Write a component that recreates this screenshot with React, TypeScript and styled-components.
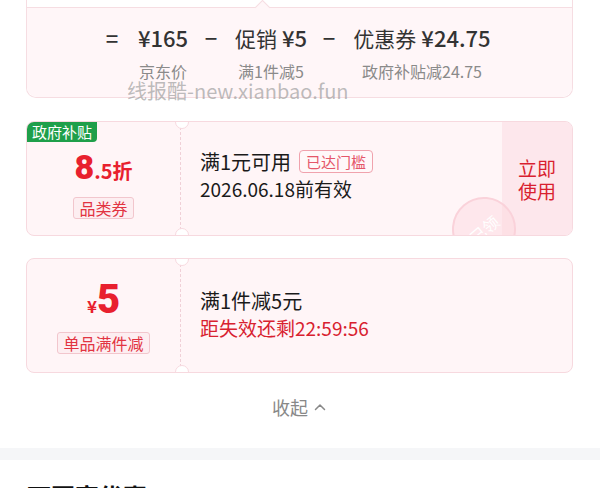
import React from 'react';
import styled, { createGlobalStyle } from 'styled-components';

//全体のスタイル
const GlobalStyle = createGlobalStyle`
  body {
    margin: 0;
    background: #ffffff;
    font-family: "Noto Sans CJK SC", "Noto Sans", sans-serif;
  }
`;

const Page = styled.div`
  position: relative;
  width: 600px;
  height: 488px;
  overflow: hidden;
  background: #ffffff;
`;

const Content = styled.div`
  padding: 0 27px 0 26px;
`;

//価格の計算カード
const SummaryCard = styled.div`
  border: 1px solid #f6dde2;
  border-top: none;
  border-radius: 0 0 10px 10px;
  background: #ffffff;
`;

const TopStrip = styled.div`
  height: 7px;
`;

const PricePanel = styled.div`
  position: relative;
  height: 90px;
  box-sizing: border-box;
  padding: 14px 0 0 73px;
  border-top: 1px solid #f6dde2;
  border-radius: 0 0 10px 10px;
  background: #fff6f8;

  &::before {
    content: "";
    position: absolute;
    top: -6px;
    left: 230px;
    width: 10px;
    height: 10px;
    background: #fff6f8;
    border-top: 1px solid #f6dde2;
    border-left: 1px solid #f6dde2;
    transform: rotate(45deg);
  }
`;

const PriceGrid = styled.div`
  display: grid;
  grid-template-columns: 24px 78px 18px 102px 14px 172px;
  grid-template-rows: 30px 22px;
  row-gap: 8px;
  align-items: center;
  justify-items: center;
`;

const Operator = styled.span`
  font-size: 22px;
  font-weight: 500;
  color: #333333;
  line-height: 30px;
`;

const PriceItem = styled.span`
  font-size: 21px;
  color: #333333;
  line-height: 30px;
  white-space: nowrap;
`;

const PriceValue = styled.b<{ $gap?: boolean }>`
  font-size: 22px;
  font-weight: 500;
  margin-left: ${({ $gap }) => ($gap ? '5px' : '0')};
`;

const PriceNote = styled.span`
  font-size: 16px;
  color: #8a8a8a;
  line-height: 22px;
  white-space: nowrap;
`;

//透かし
const Watermark = styled.div`
  position: absolute;
  left: 127px;
  top: 80px;
  font-size: 20px;
  line-height: 22px;
  color: rgba(160, 160, 160, 0.7);
  white-space: nowrap;
`;

//クーポン
const CouponList = styled.div`
  display: flex;
  flex-direction: column;
  gap: 22px;
  margin-top: 23px;
`;

const CouponCard = styled.div`
  position: relative;
  display: flex;
  height: 115px;
  box-sizing: border-box;
  border: 1px solid #f7d9df;
  border-radius: 8px;
  background: #fff5f7;
  overflow: hidden;
`;

const Notch = styled.span<{ $side: 'top' | 'bottom' }>`
  position: absolute;
  left: 148px;
  ${({ $side }) => ($side === 'top' ? 'top: -7px;' : 'bottom: -7px;')}
  width: 12px;
  height: 12px;
  border-radius: 50%;
  background: #ffffff;
  border: 1px solid #f7d9df;
`;

const LeftPart = styled.div<{ $padTop: number }>`
  width: 154px;
  flex-shrink: 0;
  box-sizing: border-box;
  padding-top: ${({ $padTop }) => $padTop}px;
  border-right: 1px dashed #f0d0d7;
  display: flex;
  flex-direction: column;
  align-items: center;
  justify-content: center;
  gap: 7px;
`;

const GreenTag = styled.span`
  position: absolute;
  left: 0;
  top: 0;
  width: 70px;
  height: 20px;
  background: #1f9f4a;
  color: #ffffff;
  font-size: 15px;
  line-height: 20px;
  text-align: center;
  border-radius: 0 0 4px 0;
`;

const Amount = styled.div`
  display: flex;
  align-items: baseline;
  color: #e8202e;
  font-weight: 700;
  line-height: 38px;
`;

const AmountPart = styled.span<{ $size: number }>`
  font-size: ${({ $size }) => $size}px;
  font-family: ${({ $size }) => ($size < 24 ? '"Noto Sans CJK SC", Roboto, sans-serif' : 'Roboto, sans-serif')};
  font-weight: ${({ $size }) => ($size < 24 ? 700 : 900)};
`;

const KindTag = styled.span`
  height: 20px;
  padding: 0 5px;
  border: 1px solid #f2c6cd;
  border-radius: 3px;
  background: #fdeef1;
  color: #e23341;
  font-size: 16px;
  line-height: 20px;
`;

const MiddlePart = styled.div<{ $padBottom: number }>`
  flex: 1;
  padding: 0 0 ${({ $padBottom }) => $padBottom}px 19px;
  display: flex;
  flex-direction: column;
  justify-content: center;
`;

const TitleRow = styled.div`
  display: flex;
  align-items: center;
  gap: 8px;
  height: 28px;
`;

const Title = styled.span`
  font-size: 20px;
  color: #1a1a1a;
`;

const ReachTag = styled.span`
  height: 21px;
  padding: 0 6px;
  border: 1px solid #f0a2ad;
  border-radius: 4px;
  background: #fff8f9;
  color: #e5576a;
  font-size: 15px;
  line-height: 21px;
`;

const SubText = styled.div<{ $red?: boolean }>`
  font-size: 19px;
  line-height: 28px;
  color: ${({ $red }) => ($red ? '#d8212f' : '#1a1a1a')};
`;

const ActionPart = styled.div`
  width: 70px;
  flex-shrink: 0;
  display: flex;
  flex-direction: column;
  align-items: center;
  justify-content: center;
  background: #fde7ec;
  color: #d91f30;
  font-size: 19px;
  line-height: 23px;
`;

const Stamp = styled.div`
  position: absolute;
  left: 425px;
  top: 75px;
  width: 60px;
  height: 60px;
  border-radius: 50%;
  border: 2px solid #fad2da;
  background: rgba(252, 214, 222, 0.45);
  display: flex;
  align-items: center;
  justify-content: center;
  color: #ffffff;
  font-size: 16px;
  transform: rotate(-40deg);
`;

//折りたたみ
const Collapse = styled.div`
  display: flex;
  align-items: center;
  justify-content: center;
  gap: 5px;
  height: 26px;
  margin: 21px 0 28px;
  color: #888888;
  font-size: 18px;
`;

const Band = styled.div`
  height: 12px;
  background: #f5f6f8;
`;

const Heading = styled.div`
  margin-top: 20px;
  padding-left: 27px;
  font-size: 24px;
  font-weight: 700;
  line-height: 32px;
  color: #111111;
`;

function PriceSummary() {
  return (
    <SummaryCard>
      <TopStrip />
      <PricePanel>
        <PriceGrid>
          <Operator>=</Operator>
          <PriceItem><PriceValue>¥165</PriceValue></PriceItem>
          <Operator>−</Operator>
          <PriceItem>促销<PriceValue $gap>¥5</PriceValue></PriceItem>
          <Operator>−</Operator>
          <PriceItem>优惠券<PriceValue $gap>¥24.75</PriceValue></PriceItem>
          <span />
          <PriceNote>京东价</PriceNote>
          <span />
          <PriceNote>满1件减5</PriceNote>
          <span />
          <PriceNote>政府补贴减24.75</PriceNote>
        </PriceGrid>
      </PricePanel>
    </SummaryCard>
  );
}

function ChevronUp() {
  return (
    <svg width="14" height="14" viewBox="0 0 14 14" fill="none">
      <path d="M2.5 9.5 L7 5 L11.5 9.5" stroke="#888888" strokeWidth="1.5" strokeLinecap="round" strokeLinejoin="round" />
    </svg>
  );
}

function App() {
  return (
    <Page>
      <GlobalStyle />
      <Content>
        <PriceSummary />
        <CouponList>
          <CouponCard>
            <GreenTag>政府补贴</GreenTag>
            <Notch $side="top" />
            <Notch $side="bottom" />
            <LeftPart $padTop={10}>
              <Amount>
                <AmountPart $size={34}>8</AmountPart>
                <AmountPart $size={20}>.5折</AmountPart>
              </Amount>
              <KindTag>品类券</KindTag>
            </LeftPart>
            <MiddlePart $padBottom={7}>
              <TitleRow>
                <Title>满1元可用</Title>
                <ReachTag>已达门槛</ReachTag>
              </TitleRow>
              <SubText>2026.06.18前有效</SubText>
            </MiddlePart>
            <ActionPart>
              <span>立即</span>
              <span>使用</span>
            </ActionPart>
            <Stamp>已领</Stamp>
          </CouponCard>
          <CouponCard>
            <Notch $side="top" />
            <Notch $side="bottom" />
            <LeftPart $padTop={4}>
              <Amount>
                <AmountPart $size={17}>¥</AmountPart>
                <AmountPart $size={40}>5</AmountPart>
              </Amount>
              <KindTag>单品满件减</KindTag>
            </LeftPart>
            <MiddlePart $padBottom={3}>
              <TitleRow>
                <Title>满1件减5元</Title>
              </TitleRow>
              <SubText $red>距失效还剩22:59:56</SubText>
            </MiddlePart>
          </CouponCard>
        </CouponList>
        <Collapse>
          收起
          <ChevronUp />
        </Collapse>
      </Content>
      <Band />
      <Heading>可再享优惠</Heading>
      <Watermark>线报酷-new.xianbao.fun</Watermark>
    </Page>
  );
}

export default App;
